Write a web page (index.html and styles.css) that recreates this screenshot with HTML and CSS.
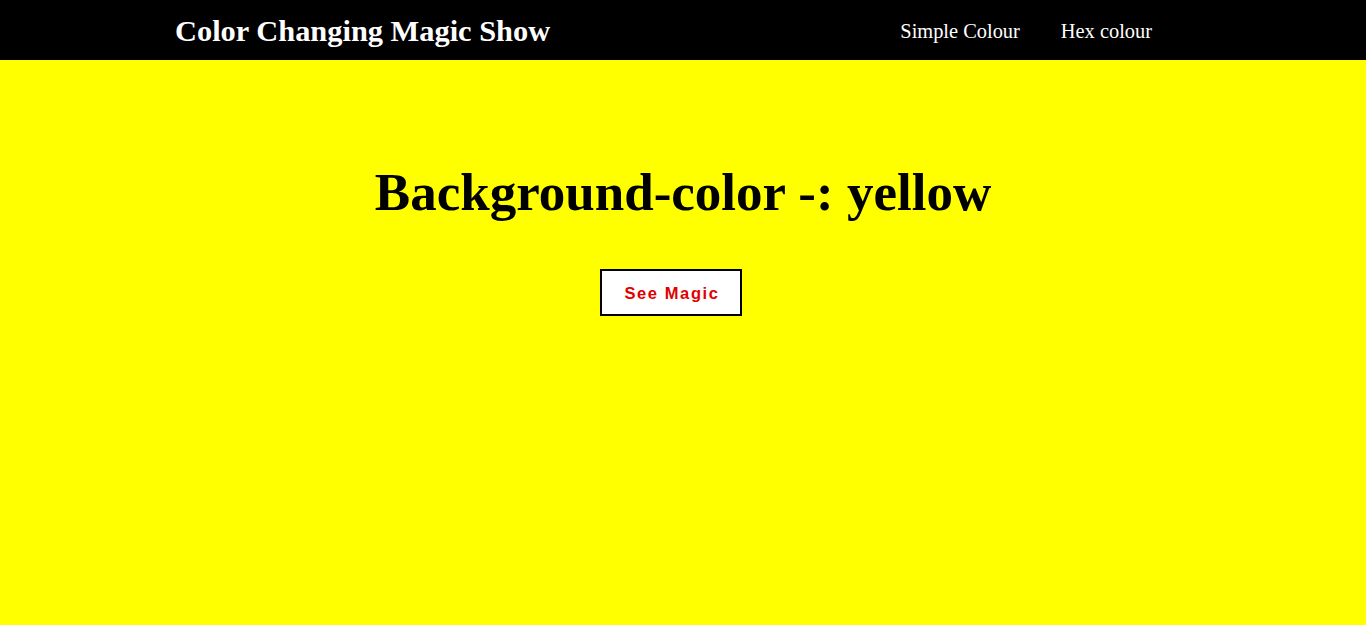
FILE: index.html
```html
<!DOCTYPE html>
<html>
<head>
<meta charset="utf-8">
<link rel="stylesheet" href="styles.css">
</head>
<body>
<header class="topbar">
  <div class="brand">Color Changing Magic Show</div>
  <nav class="nav">
    <a class="nav-link" href="#">Simple Colour</a>
    <a class="nav-link" href="#">Hex colour</a>
  </nav>
</header>
<main class="stage">
  <h1 class="headline">Background-color -: yellow</h1>
  <div class="actions">
    <button class="magic-btn">See Magic</button>
  </div>
</main>
</body>
</html>
```
FILE: styles.css
```css
html, body {
  margin: 0;
  padding: 0;
  height: 100%;
}
body {
  background: #ffff00;
  font-family: "Liberation Serif", serif;
}
.topbar {
  height: 60px;
  background: #000;
  display: flex;
  align-items: center;
  justify-content: space-between;
  padding: 0 214px 0 175px;
}
.brand {
  color: #fff;
  font-weight: bold;
  font-size: 30.4px;
  padding-top: 2px;
}
.nav {
  display: flex;
  gap: 41px;
  padding-top: 2px;
}
.nav-link {
  color: #fff;
  text-decoration: none;
  font-size: 20.4px;
}
.stage {
  display: flex;
  flex-direction: column;
  align-items: center;
  padding-top: 100px;
}
.headline {
  margin: 0;
  font-size: 53px;
  font-weight: bold;
  line-height: 64px;
}
.actions {
  margin-top: 45px;
  padding-right: 24px;
}
.magic-btn {
  width: 142px;
  height: 47px;
  background: #fff;
  border: 2px solid #000;
  color: #e00000;
  font-family: "Liberation Sans", Arial, sans-serif;
  font-weight: bold;
  font-size: 16.5px;
  letter-spacing: 1.6px;
  padding: 2px 0 0 2px;
}
```
